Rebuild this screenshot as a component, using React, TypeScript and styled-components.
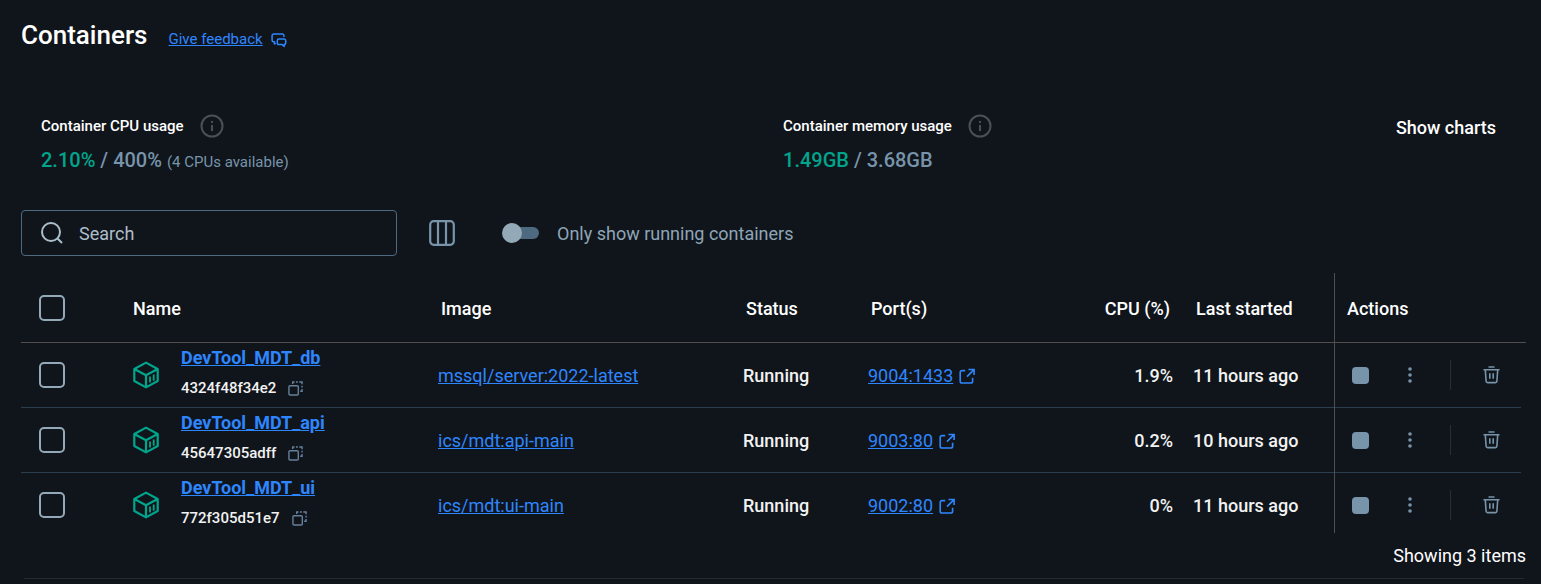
import React from "react";
import styled, { createGlobalStyle } from "styled-components";

const GlobalStyle = createGlobalStyle`
  *, *::before, *::after { box-sizing: border-box; }
  body {
    margin: 0;
    background: #10151b;
    color: #fff;
    font-family: Roboto, "Liberation Sans", sans-serif;
    font-size: 18px;
    line-height: 24px;
  }
`;

const Page = styled.main`
  padding: 19px 15px 0 21px;
`;

const Header = styled.header`
  display: flex;
  align-items: center;
  gap: 21px;
  height: 32px;
`;

const Title = styled.h1`
  margin: 0;
  font-size: 26px;
  line-height: 32px;
  font-weight: 500;
`;

const Link = styled.a<{ $bold?: boolean }>`
  color: #2e86ff;
  font-weight: ${(p) => (p.$bold ? 700 : 400)};
  text-decoration: underline;
`;

const FeedbackLink = styled.a`
  display: inline-flex;
  align-items: center;
  gap: 8px;
  padding-top: 8px;
  color: #2e86ff;
  font-size: 15px;
  line-height: 20px;
`;

const Stats = styled.section`
  display: grid;
  grid-template-columns: 51% 1fr auto;
  padding: 61px 30px 0 20px;
`;

const StatLabel = styled.div`
  display: flex;
  align-items: center;
  gap: 16px;
  height: 28px;
  font-size: 15px;
  font-weight: 500;
`;

const StatValue = styled.div`
  margin-top: 8px;
  color: #7794ab;
  font-size: 20px;
  font-weight: 500;
`;

const Used = styled.span`
  color: #00a58c;
`;

const Note = styled.small`
  font-size: 15px;
  font-weight: 400;
`;

const TextButton = styled.button`
  align-self: start;
  margin: 4px 0 0;
  padding: 0;
  border: 0;
  background: none;
  color: #fff;
  font: inherit;
  font-weight: 500;
`;

const Toolbar = styled.div`
  display: flex;
  align-items: center;
  margin-top: 36px;
`;

const SearchBox = styled.label`
  display: flex;
  align-items: center;
  gap: 14px;
  width: 376px;
  height: 46px;
  padding: 0 17px;
  border: 1px solid #4e6a81;
  border-radius: 4px;
  color: #adbecb;
`;

const SearchInput = styled.input`
  flex: 1;
  min-width: 0;
  padding: 2px 0 0;
  border: 0;
  outline: 0;
  background: none;
  color: #fff;
  font: inherit;
  &::placeholder { color: #adbecb; opacity: 1; }
`;

const IconButton = styled.button`
  display: inline-flex;
  align-items: center;
  justify-content: center;
  padding: 0;
  border: 0;
  background: none;
  color: #7794ab;
`;

const ColumnsButton = styled(IconButton)`
  width: 32px;
  height: 32px;
  margin: 0 44px 0 29px;
`;

const SwitchLabel = styled.label`
  display: flex;
  align-items: center;
  gap: 18px;
  color: #8ea5b7;
`;

const SwitchText = styled.span`
  padding-top: 2px;
`;

const Switch = styled.input`
  appearance: none;
  display: flex;
  align-items: center;
  width: 30px;
  height: 12px;
  margin: 0 0 0 7px;
  background: #4e6a81;
  border-radius: 6px;
  &::before {
    content: "";
    flex: none;
    width: 20px;
    height: 20px;
    margin: 0 -7px;
    border-radius: 50%;
    background: #94a9b8;
  }
  &:checked { justify-content: flex-end; }
`;

const Table = styled.table`
  width: 100%;
  margin-top: 17px;
  border-collapse: separate;
  border-spacing: 0;
  table-layout: fixed;
`;

const Col = styled.col<{ $width?: number }>`
  width: ${(p) => (p.$width ? `${p.$width}px` : "auto")};
`;

const HeadCell = styled.th<{ $right?: boolean }>`
  height: 70px;
  padding: 2px 3px 0;
  border-bottom: 1px solid #514f4e;
  font-weight: 500;
  text-align: ${(p) => (p.$right ? "right" : "left")};
  white-space: nowrap;
`;

const HeadName = styled(HeadCell)`
  padding-left: 0;
`;

const HeadActions = styled(HeadCell)`
  padding-left: 12px;
  border-left: 1px solid #514f4e;
`;

const Cell = styled.td<{ $right?: boolean }>`
  height: 65px;
  padding: 2px 0 0;
  border-bottom: 1px solid #2b3e4d;
  font-weight: 500;
  text-align: ${(p) => (p.$right ? "right" : "left")};
  white-space: nowrap;
  color: #f2f2f2;
  tr:last-child > & { height: 60px; border-bottom: 0; padding-top: 6px; }
`;

const CheckHeadCell = styled(HeadCell)`
  padding: 0 0 0 18px;
`;

const CheckCell = styled(Cell)`
  padding: 0 0 0 18px;
  tr:last-child > & { padding-top: 4px; }
`;

const Checkbox = styled.input`
  appearance: none;
  display: block;
  width: 26px;
  height: 26px;
  margin: 0;
  border: 2px solid #94a9b8;
  border-radius: 5px;
  &:checked { background: #2e86ff; }
`;

const NameCell = styled(Cell)`
  padding: 0;
  tr:last-child > & { padding: 4px 0 0; }
`;

const NameLayout = styled.div`
  display: flex;
  align-items: center;
  gap: 22px;
`;

const NameText = styled.div`
  padding-bottom: 4px;
  line-height: 20px;
`;

const IdLine = styled.div`
  display: flex;
  align-items: center;
  gap: 12px;
  height: 20px;
  margin-top: 10px;
  font-size: 15px;
`;

const Ports = styled.span`
  display: flex;
  align-items: center;
  gap: 5px;
`;

const ActionsCell = styled(Cell)`
  padding: 0;
  border-left: 1px solid #514f4e;
  border-bottom: 0;
  tr:last-child > & { padding: 0; }
`;

const ActionsLayout = styled.div<{ $last: boolean }>`
  display: grid;
  grid-template-columns: 50px 50px 31px 50px;
  align-items: center;
  height: ${(p) => (p.$last ? 60 : 65)}px;
  margin-right: 5px;
  padding-top: ${(p) => (p.$last ? 4 : 0)}px;
  border-bottom: ${(p) => (p.$last ? "0" : "1px solid #2b3e4d")};
`;

const Divider = styled.span`
  justify-self: center;
  width: 1px;
  height: 30px;
  background: #2a2d31;
`;

const StopGlyph = styled.span`
  width: 17px;
  height: 17px;
  border-radius: 4px;
  background: #7794ab;
`;

const Footer = styled.footer`
  margin: 0 2px 0 3px;
  padding: 11px 0 10px;
  border-bottom: 1px solid #26292d;
`;

const Count = styled.div`
  margin-right: -2px;
  text-align: right;
`;

const stroke = { fill: "none", stroke: "currentColor", "aria-hidden": true } as const;

const InfoIcon = () => (
  <svg width="24" height="24" viewBox="0 0 24 24" {...stroke} stroke="#4d5053" strokeWidth="2">
    <circle cx="12" cy="12" r="10.5" />
    <path d="M12 11v6M12 7v2" />
  </svg>
);

const FeedbackIcon = () => (
  <svg width="16" height="18" viewBox="0 0 16 18" {...stroke} strokeWidth="1.5" strokeLinejoin="round">
    <path d="M4.8 13.2L3.4 14v-2.2H2.6A1.5 1.5 0 0 1 1.1 10.3V5.5A1.5 1.5 0 0 1 2.6 4h8.8a1.5 1.5 0 0 1 1.5 1.5V7" />
    <path d="M7.8 9h5.4a1.5 1.5 0 0 1 1.5 1.5v2.6a1.5 1.5 0 0 1-1.5 1.5v1.8l-2-1.8H7.8a1.5 1.5 0 0 1-1.5-1.5v-2.6A1.5 1.5 0 0 1 7.8 9z" />
  </svg>
);

const SearchIcon = () => (
  <svg width="26" height="26" viewBox="0 0 26 26" {...stroke} strokeWidth="2">
    <circle cx="12" cy="12" r="9" />
    <path d="M18 18l5 5" />
  </svg>
);

const ColumnsIcon = () => (
  <svg width="26" height="26" viewBox="0 0 26 26" {...stroke} strokeWidth="2.2">
    <rect x="1.2" y="1.2" width="23.6" height="23.6" rx="3.5" />
    <path d="M9 1v24M17 1v24" />
  </svg>
);

const ContainerIcon = () => (
  <svg width="26" height="28" viewBox="0 0 26 28" {...stroke} stroke="#00a58c" strokeWidth="2.2" strokeLinejoin="round">
    <path d="M13 1.6l11.7 6.4v12L13 26.4 1.3 20V8zM1.3 8L13 14.3 24.7 8M13 14.3v12.1" />
    <path d="M17 15.4v6.2M20.7 13.6v6.2" strokeWidth="1.8" />
  </svg>
);

const CopyIcon = () => (
  <svg width="15" height="15" viewBox="0 0 16 16" {...stroke} stroke="#66809a" strokeWidth="1.5">
    <rect x="1" y="5" width="10" height="10" rx="1.2" />
    <path d="M5 3.2V1h2M8.5 1h2M12 1h3v2.5M15 5v2M15 8.5V11h-2" />
  </svg>
);

const ExternalIcon = () => (
  <svg width="18" height="18" viewBox="0 0 18 18" {...stroke} stroke="#2e86ff" strokeWidth="1.6">
    <path d="M7.2 3.6H4A1.8 1.8 0 0 0 2.2 5.4v8.8A1.8 1.8 0 0 0 4 16h8.8a1.8 1.8 0 0 0 1.8-1.8v-3.4M10.5 2.5h5.6v5.6M16 2.6L9 9.6" />
  </svg>
);

const KebabIcon = () => (
  <svg width="4" height="16" viewBox="0 0 4 16" fill="currentColor" aria-hidden>
    <circle cx="2" cy="2" r="1.8" />
    <circle cx="2" cy="8" r="1.8" />
    <circle cx="2" cy="14" r="1.8" />
  </svg>
);

const TrashIcon = () => (
  <svg width="17" height="18" viewBox="0 0 17 18" {...stroke} strokeWidth="1.6">
    <path d="M5.5 1h6M.5 3.7h16M2.3 3.7l.8 11.5a1.5 1.5 0 0 0 1.5 1.4h7.8a1.5 1.5 0 0 0 1.5-1.4l.8-11.5M6.8 7.2v5.6M10.2 7.2v5.6" />
  </svg>
);

const containers = [
  { name: "DevTool_MDT_db", id: "4324f48f34e2", image: "mssql/server:2022-latest", port: "9004:1433", cpu: "1.9%", started: "11 hours ago" },
  { name: "DevTool_MDT_api", id: "45647305adff", image: "ics/mdt:api-main", port: "9003:80", cpu: "0.2%", started: "10 hours ago" },
  { name: "DevTool_MDT_ui", id: "772f305d51e7", image: "ics/mdt:ui-main", port: "9002:80", cpu: "0%", started: "11 hours ago" },
];

export default function App() {
  return (
    <Page>
      <GlobalStyle />
      <Header>
        <Title>Containers</Title>
        <FeedbackLink href="#feedback">Give feedback<FeedbackIcon /></FeedbackLink>
      </Header>

      <Stats>
        <div>
          <StatLabel>Container CPU usage<InfoIcon /></StatLabel>
          <StatValue><Used>2.10%</Used> / 400% <Note>(4 CPUs available)</Note></StatValue>
        </div>
        <div>
          <StatLabel>Container memory usage<InfoIcon /></StatLabel>
          <StatValue><Used>1.49GB</Used> / 3.68GB</StatValue>
        </div>
        <TextButton type="button">Show charts</TextButton>
      </Stats>

      <Toolbar>
        <SearchBox>
          <SearchIcon />
          <SearchInput type="text" placeholder="Search" aria-label="Search" />
        </SearchBox>
        <ColumnsButton type="button" aria-label="Columns"><ColumnsIcon /></ColumnsButton>
        <SwitchLabel>
          <Switch type="checkbox" role="switch" />
          <SwitchText>Only show running containers</SwitchText>
        </SwitchLabel>
      </Toolbar>

      <Table>
        <colgroup>
          <Col $width={112} />
          <Col />
          <Col />
          <Col $width={125} />
          <Col $width={180} />
          <Col $width={125} />
          <Col $width={20} />
          <Col $width={141} />
          <Col $width={192} />
        </colgroup>
        <thead>
          <tr>
            <CheckHeadCell><Checkbox type="checkbox" aria-label="Select all" /></CheckHeadCell>
            <HeadName>Name</HeadName>
            <HeadCell>Image</HeadCell>
            <HeadCell>Status</HeadCell>
            <HeadCell>Port(s)</HeadCell>
            <HeadCell $right>CPU (%)</HeadCell>
            <HeadCell />
            <HeadCell>Last started</HeadCell>
            <HeadActions>Actions</HeadActions>
          </tr>
        </thead>
        <tbody>
          {containers.map((c, i) => (
            <tr key={c.id}>
              <CheckCell><Checkbox type="checkbox" aria-label={`Select ${c.name}`} /></CheckCell>
              <NameCell>
                <NameLayout>
                  <ContainerIcon />
                  <NameText>
                    <Link $bold href={`#${c.name}`}>{c.name}</Link>
                    <IdLine>
                      {c.id}
                      <IconButton type="button" aria-label="Copy ID"><CopyIcon /></IconButton>
                    </IdLine>
                  </NameText>
                </NameLayout>
              </NameCell>
              <Cell><Link href={`#${c.image}`}>{c.image}</Link></Cell>
              <Cell>Running</Cell>
              <Cell><Ports><Link href={`#${c.port}`}>{c.port}</Link><ExternalIcon /></Ports></Cell>
              <Cell $right>{c.cpu}</Cell>
              <Cell />
              <Cell>{c.started}</Cell>
              <ActionsCell>
                <ActionsLayout $last={i === containers.length - 1}>
                  <IconButton type="button" aria-label="Stop"><StopGlyph /></IconButton>
                  <IconButton type="button" aria-label="More actions"><KebabIcon /></IconButton>
                  <Divider />
                  <IconButton type="button" aria-label="Delete"><TrashIcon /></IconButton>
                </ActionsLayout>
              </ActionsCell>
            </tr>
          ))}
        </tbody>
      </Table>

      <Footer><Count>Showing 3 items</Count></Footer>
    </Page>
  );
}
